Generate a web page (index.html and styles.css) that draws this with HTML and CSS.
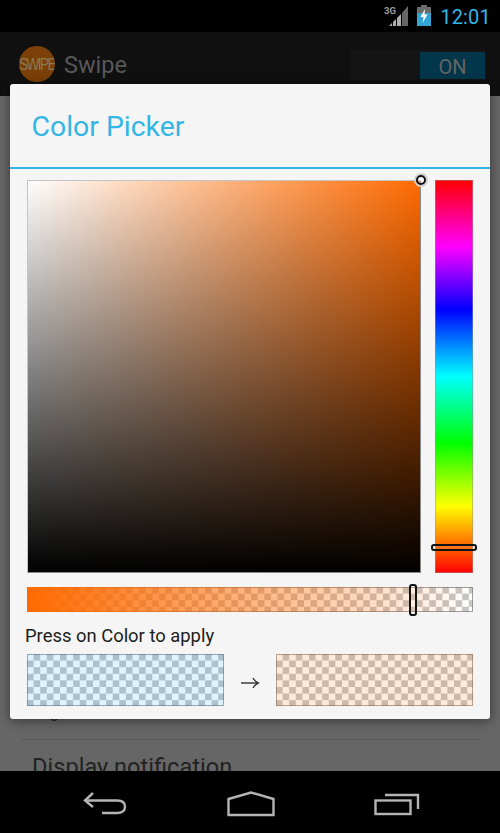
FILE: index.html
```html
<!DOCTYPE html>
<html lang="en">
<head>
<meta charset="utf-8">
<title>Color Picker</title>
<link rel="stylesheet" href="styles.css">
</head>
<body>
<div class="screen">
  <div class="status">
    <svg class="signal" width="25" height="22" viewBox="0 0 25 22">
      <text class="net" x="0" y="9">3G</text>
      <polygon points="5,21 8,21 8,18" fill="#b0b0b0"/>
      <polygon points="9,21 12,21 12,14 9,17" fill="#b0b0b0"/>
      <polygon points="13,21 17,21 17,9 13,13" fill="#b0b0b0"/>
      <polygon points="18,21 24,21 24,1 18,8" fill="#666"/>
    </svg>
    <svg class="battery" width="14" height="21" viewBox="0 0 14 21">
      <rect x="4" y="0" width="6" height="2" fill="#6b6b6b"/>
      <rect x="0" y="2" width="14" height="6" fill="#6b6b6b"/>
      <rect x="0" y="8" width="14" height="13" fill="#33a5d5"/>
      <polygon points="8,4 3.500,12 6.500,12 5.500,18 10.500,9.500 7.500,9.500" fill="#fff"/>
    </svg>
    <span class="clock">12:01</span>
  </div>
  <div class="actionbar">
    <div class="logo"><span class="logo-text">SWIPE</span></div>
    <span class="app-title">Swipe</span>
    <div class="toggle-track"><span class="toggle-on">ON</span></div>
  </div>
  <div class="content">
    <div class="row-high">High</div>
    <div class="row-display">Display notification</div>
  </div>
  <div class="nav">
    <svg width="46" height="26" viewBox="0 0 46 26" fill="none" stroke="#b4b4b4" stroke-width="2.400">
      <path d="M11 2 L3 9.500 L11 16"/>
      <path d="M3 9.500 H35 Q43 9.500 43 15.500 Q43 22 35 22 H20"/>
    </svg>
    <svg width="48" height="26" viewBox="0 0 48 26" fill="none" stroke="#b4b4b4" stroke-width="2.400">
      <path d="M1.500 24 V8 L24 1.500 L46.500 8 V24 Z"/>
    </svg>
    <svg width="46" height="24" viewBox="0 0 46 24" fill="none" stroke="#b4b4b4" stroke-width="2.400">
      <rect x="1.500" y="8.500" width="35" height="13.500"/>
      <path d="M11 3 H44 V17"/>
    </svg>
  </div>
  <div class="dialog">
    <div class="dialog-head"><span class="dialog-title">Color Picker</span></div>
    <div class="dialog-body">
      <div class="picker-row">
        <div class="sv">
          <span class="sv-knob"></span>
        </div>
        <div class="hue"><span class="hue-handle"></span></div>
      </div>
      <div class="alpha checker">
        <div class="alpha-fill"></div>
        <span class="alpha-handle"></span>
      </div>
      <p class="hint">Press on Color to apply</p>
      <div class="swatches">
        <div class="swatch checker"><div class="tint tint-old"></div></div>
        <span class="arrow">
          <svg width="20" height="14" viewBox="0 0 20 14" fill="none" stroke="#222" stroke-width="1.300">
            <path d="M1 7 H18"/>
            <path d="M13 2 Q15 5.500 18.500 7 Q15 8.500 13 12"/>
          </svg>
        </span>
        <div class="swatch checker"><div class="tint tint-new"></div></div>
      </div>
    </div>
  </div>
</div>
</body>
</html>
```
FILE: styles.css
```css
* { box-sizing: border-box; }
html, body { margin: 0; padding: 0; }
body { width: 500px; height: 833px; overflow: hidden; background: #000; font-family: Roboto, "Liberation Sans", sans-serif; }
.screen { position: relative; width: 500px; height: 833px; display: flex; flex-direction: column; }

.status { height: 32px; background: #000; display: flex; align-items: flex-start; justify-content: flex-end; padding: 5px 9px 0 0; }
.signal { margin-right: 8px; }
.battery { margin-right: 9px; }
.net { font: bold 9.500px Roboto, sans-serif; fill: #9a9a9a; }
.clock { color: #33b5e5; font-size: 20px; line-height: 24px; letter-spacing: 0.2px; }

.actionbar { height: 64px; background: #101010; display: flex; align-items: center; padding: 0 15px 0 19px; }
.logo { width: 36px; height: 36px; border-radius: 50%; background: #7a4008; display: flex; align-items: center; justify-content: center; overflow: hidden; }
.logo-text { color: #8a7a55; font-size: 13.500px; letter-spacing: -1.500px; font-family: "Liberation Sans", sans-serif; transform: scaleY(1.250); }
.app-title { color: #585858; font-size: 23.500px; line-height: 30px; margin: 2px 0 0 9px; flex: 1; }
.toggle-track { width: 135px; height: 30px; background: #141414; display: flex; justify-content: flex-end; margin-top: 2px; }
.toggle-on { width: 65px; height: 27px; background: #02364a; color: #646464; font-size: 20px; line-height: 30px; text-align: center; margin-top: 2px; }

.content { flex: 1; background: #666; padding: 0 21px; display: flex; flex-direction: column; justify-content: flex-end; overflow: hidden; color: #222; position: relative; }
.row-high { font-size: 18px; line-height: 22px; padding: 0 11px 17px; border-bottom: 1px solid #5a5a5a; }
.row-display { font-size: 23.600px; line-height: 30px; height: 31px; padding: 12px 11px 0; overflow: visible; }

.nav { height: 62px; background: #000; display: flex; align-items: center; padding: 4px 80px 0 82px; justify-content: space-between; position: relative; z-index: 1; }

.dialog { position: absolute; left: 10px; top: 84px; width: 480px; height: 635px; background: #f5f5f5; border-radius: 3px; box-shadow: 0 2px 12px rgba(0,0,0,.45); z-index: 2; }
.dialog-head { height: 85px; padding-left: 21.500px; border-bottom: 2px solid #33b5e5; display: flex; align-items: center; }
.dialog-title { color: #33b5e5; font-size: 28.400px; line-height: 86px; margin-top: 3px; }
.dialog-body { padding: 11px 17px 0; }

.picker-row { display: flex; gap: 14px; }
.sv { position: relative; width: 394px; height: 393px; background: linear-gradient(to bottom, rgba(0,0,0,0), #000), linear-gradient(to right, #fff, #ff6a00); border: 1px solid #c4c4c4; border-right-color: #888; border-bottom-color: #888; background-origin: border-box; }
.sv-knob { position: absolute; right: -6px; top: -6px; width: 10px; height: 10px; border-radius: 50%; border: 2px solid #111; background: rgba(255,255,255,.3); box-shadow: 0 0 0 2px #d0d0d0; }
.hue { position: relative; width: 38px; height: 393px; background: linear-gradient(to bottom, #f00, #f0f 17%, #00f 33%, #0ff 50%, #0f0 67%, #ff0 83%, #f00); background-origin: border-box; border: 1px solid rgba(150,150,150,.5); }
.hue-handle { position: absolute; left: -5px; right: -5px; top: 363px; height: 7px; border: 2px solid #111; border-radius: 3px; background: rgba(255,255,255,.1); }

.checker { background-color: #fff; background-image: conic-gradient(#c6c6c6 25%, transparent 0 50%, #c6c6c6 0 75%, transparent 0); background-size: 13.200px 13.200px; background-origin: border-box; }
.alpha { position: relative; height: 25px; margin-top: 14px; border: 1px solid rgba(120,120,120,.7); }
.alpha-fill { margin: -1px; height: 25px; background: linear-gradient(to right, #ff6a00, rgba(255,106,0,0)); }
.alpha-handle { position: absolute; left: 381px; top: -4px; width: 8px; height: 32px; border: 2px solid #111; border-radius: 3px; background: rgba(255,255,255,.1); }

.hint { margin: 11px 0 0 -2px; color: #1c1c1c; font-size: 18.400px; line-height: 26px; }
.swatches { display: flex; margin-top: 5px; justify-content: space-between; }
.swatch { width: 197px; height: 52px; border: 1px solid rgba(110,110,110,.6); }
.tint { margin: -1px; height: 52px; }
.tint-old { background: rgba(0,160,255,.125); }
.tint-new { background: rgba(255,106,0,.15); }
.arrow { display: flex; align-items: center; padding-top: 6px; }
```
